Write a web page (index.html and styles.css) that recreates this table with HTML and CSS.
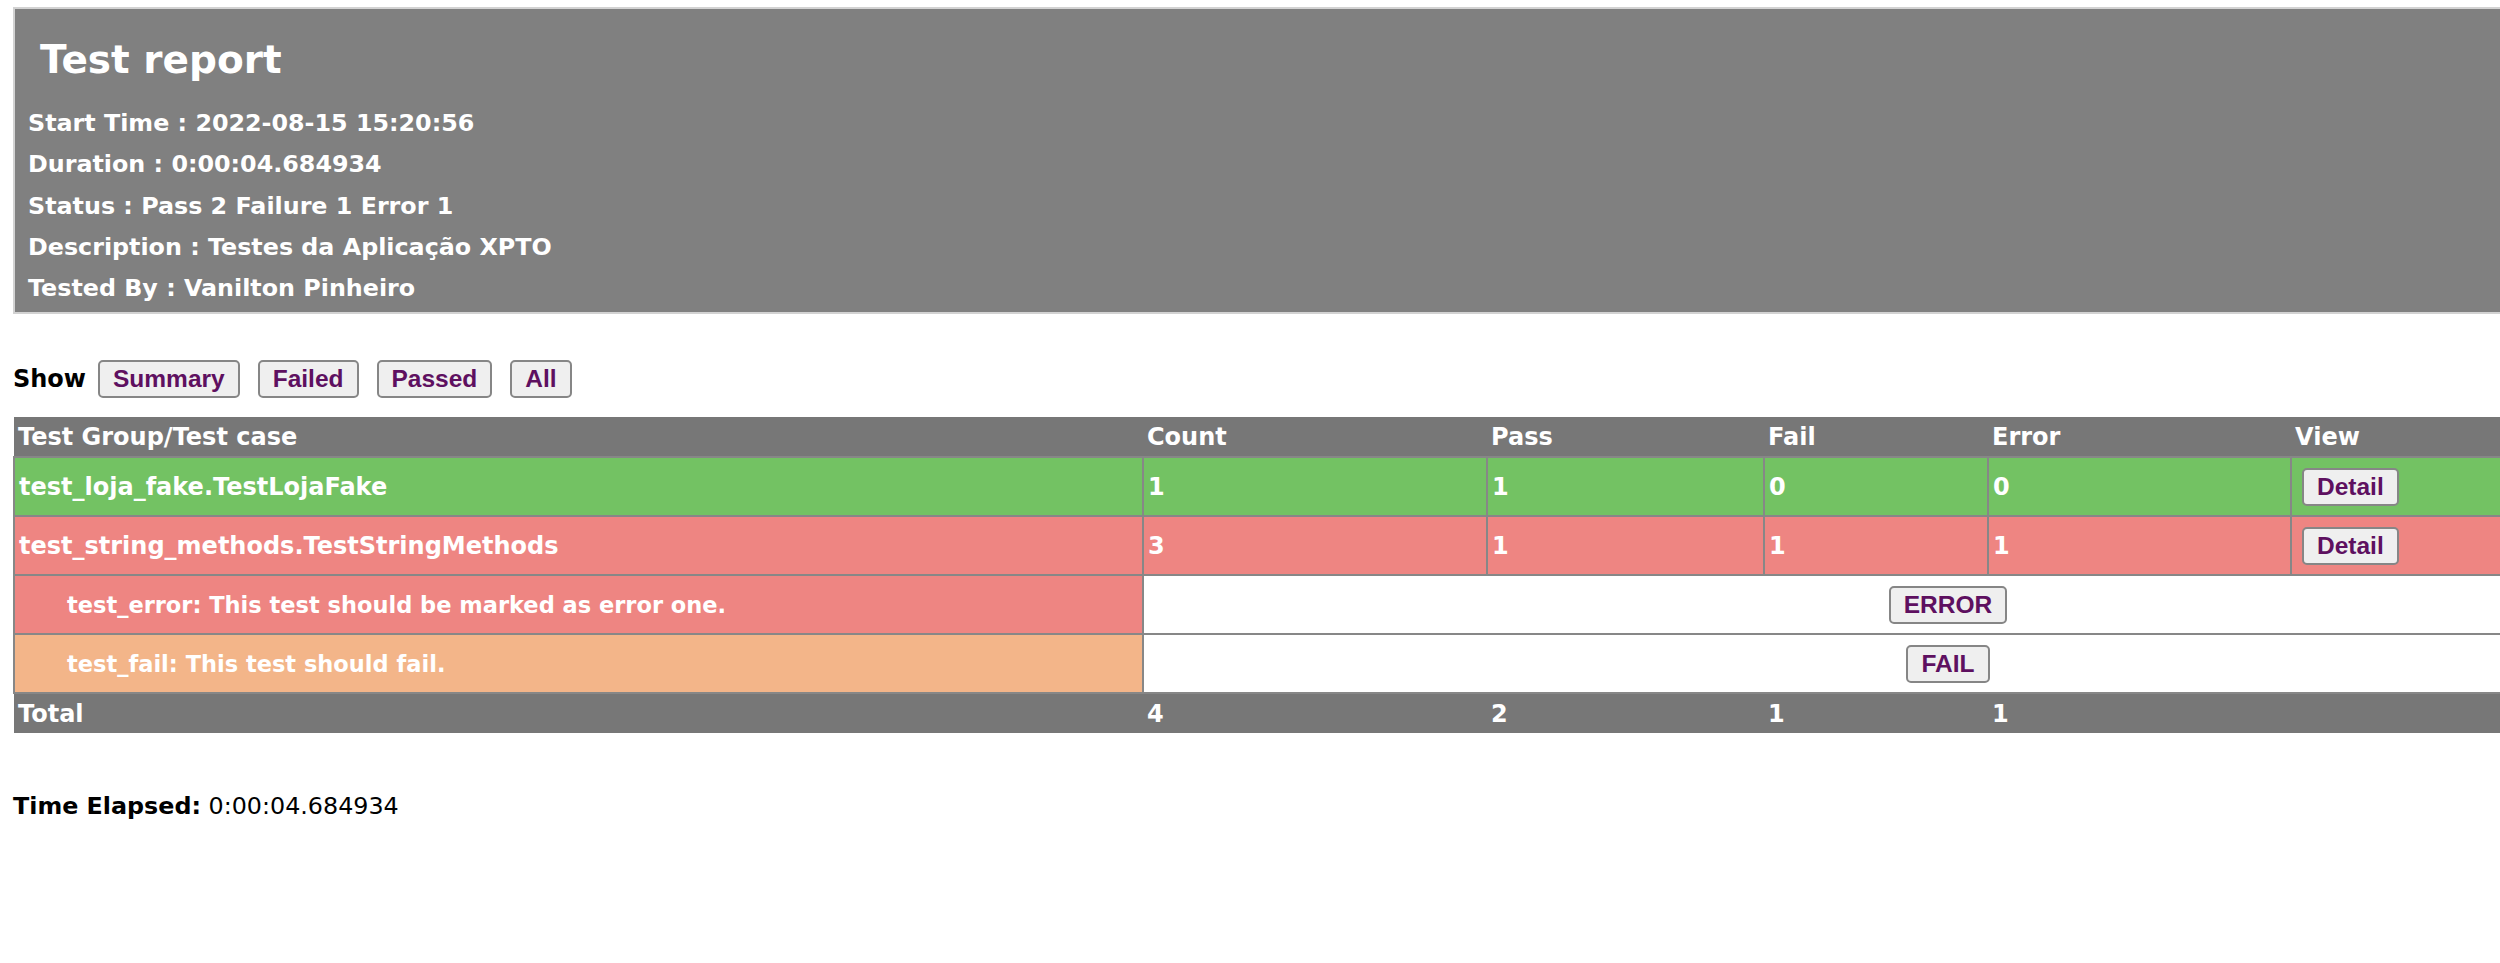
FILE: index.html
```html
<!DOCTYPE html>
<html lang="pt">
<head>
<meta charset="utf-8">
<title>Test report</title>
<link rel="stylesheet" href="styles.css">
</head>
<body>
<div class="page">
  <div class="heading">
    <h1 class="title">Test report</h1>
    <p class="attribute">Start Time : 2022-08-15 15:20:56</p>
    <p class="attribute">Duration : 0:00:04.684934</p>
    <p class="attribute">Status : Pass 2 Failure 1 Error 1</p>
    <p class="attribute">Description : Testes da Aplicação XPTO</p>
    <p class="attribute">Tested By : Vanilton Pinheiro</p>
  </div>

  <div class="show-bar">
    <span class="show-label">Show</span>
    <button class="btn">Summary</button>
    <button class="btn">Failed</button>
    <button class="btn">Passed</button>
    <button class="btn">All</button>
  </div>

  <table class="result">
    <colgroup>
      <col class="col-name">
      <col class="col-count">
      <col class="col-pass">
      <col class="col-fail">
      <col class="col-error">
      <col class="col-view">
    </colgroup>
    <tr class="header-row">
      <td>Test Group/Test case</td>
      <td>Count</td>
      <td>Pass</td>
      <td>Fail</td>
      <td>Error</td>
      <td>View</td>
    </tr>
    <tr class="row pass-class">
      <td>test_loja_fake.TestLojaFake</td>
      <td>1</td>
      <td>1</td>
      <td>0</td>
      <td>0</td>
      <td><button class="btn btn-detail">Detail</button></td>
    </tr>
    <tr class="row error-class">
      <td>test_string_methods.TestStringMethods</td>
      <td>3</td>
      <td>1</td>
      <td>1</td>
      <td>1</td>
      <td><button class="btn btn-detail">Detail</button></td>
    </tr>
    <tr class="row case">
      <td class="case-name error-case">test_error: This test should be marked as error one.</td>
      <td colspan="5" class="case-status"><button class="btn">ERROR</button></td>
    </tr>
    <tr class="row case">
      <td class="case-name fail-case">test_fail: This test should fail.</td>
      <td colspan="5" class="case-status"><button class="btn">FAIL</button></td>
    </tr>
    <tr class="total-row">
      <td>Total</td>
      <td>4</td>
      <td>2</td>
      <td>1</td>
      <td>1</td>
      <td></td>
    </tr>
  </table>

  <p class="elapsed"><strong>Time Elapsed:</strong> 0:00:04.684934</p>
</div>
</body>
</html>
```

FILE: styles.css
```css
html, body {
  margin: 0;
  padding: 0;
}

body {
  overflow-x: hidden;
  background: #ffffff;
  color: #000000;
  font-family: "DejaVu Sans", Verdana, sans-serif;
}

.page {
  width: 2741px;
  padding: 7px 0 0 13px;
}

/* heading panel */
.heading {
  background: #808080;
  border: 2px solid #d2d2d2;
  color: #ffffff;
  padding: 27px 0 3px 13px;
}

.title {
  margin: 0 0 19px 12px;
  font-size: 39px;
  line-height: 48px;
  font-weight: bold;
}

.attribute {
  margin: 0;
  font-size: 23.8px;
  line-height: 41.3px;
  font-weight: bold;
}

/* show bar */
.show-bar {
  display: flex;
  align-items: center;
  height: 38px;
  margin-top: 46px;
}

.show-label {
  font-size: 24px;
  font-weight: bold;
  margin-right: 12px;
}

.btn {
  font-family: "Liberation Sans", Arial, Helvetica, sans-serif;
  font-weight: bold;
  font-size: 24.5px;
  color: #5e1060;
  background: #efefef;
  border: 2px solid #868686;
  border-radius: 5px;
  height: 38px;
  line-height: 34px;
  padding: 0 13px;
  box-sizing: border-box;
  margin: 0;
}

.show-bar .btn {
  margin-right: 18px;
}

/* result table */
.result {
  margin-top: 19px;
  border-collapse: collapse;
  table-layout: fixed;
  width: 2739px;
  font-size: 24px;
  font-weight: bold;
  color: #ffffff;
}

.col-name { width: 1129px; }
.col-count { width: 344px; }
.col-pass { width: 277px; }
.col-fail { width: 224px; }
.col-error { width: 303px; }
.col-view { width: 462px; }

.result td {
  padding: 0 4px;
  vertical-align: middle;
  white-space: nowrap;
}

.header-row td,
.total-row td {
  background: #777777;
  height: 39px;
}

.row td {
  border: 2px solid #878787;
  height: 57px;
}

.pass-class td { background: #73c263; }
.error-class td { background: #ee8582; }

.case-name {
  padding-left: 52px !important;
  font-size: 22.5px;
}

.error-case { background: #ee8582; }
.fail-case { background: #f3b589; }

.case-status {
  background: #ffffff;
  text-align: center;
}

.btn-detail {
  margin-left: 6px;
}

/* footer */
.elapsed {
  margin: 59px 0 0 0;
  font-size: 23.8px;
  line-height: 28px;
}
```
